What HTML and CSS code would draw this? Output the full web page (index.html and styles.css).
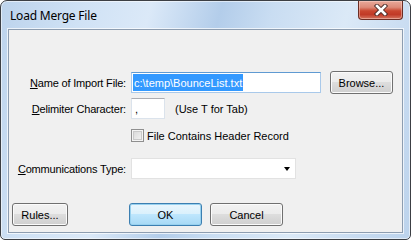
FILE: index.html
```html
<!DOCTYPE html>
<html lang="en">
<head>
	<meta charset="UTF-8">
	<title>Load Merge File</title>
	<link rel="stylesheet" href="styles.css">
</head>
<body>

	<div class="window">
		<div class="titlebar">
			<span class="title">Load Merge File</span>
			<span class="close">
				<svg width="16" height="12" viewBox="0 0 16 12">
					<path d="M4 2 L12 10 M12 2 L4 10" stroke="#4a2a26" stroke-width="4.4" stroke-linecap="square"/>
					<path d="M4 2 L12 10 M12 2 L4 10" stroke="#ffffff" stroke-width="2.6" stroke-linecap="square"/>
				</svg>
			</span>
		</div>

		<div class="client">
			<div class="row row-file">
				<span class="lbl"><u>N</u>ame of Import File:</span>
				<span class="edit edit-file"><span class="sel">c:\temp\BounceList.txt</span></span>
				<button class="btn btn-browse">Browse...</button>
			</div>

			<div class="row row-delim">
				<span class="lbl"><u>D</u>elimiter Character:</span>
				<span class="edit edit-delim">,</span>
				<span class="hint">(Use T for Tab)</span>
			</div>

			<div class="row row-check">
				<span class="check"></span>
				<span class="check-text">File Contains Header Record</span>
			</div>

			<div class="row row-comm">
				<span class="lbl"><u>C</u>ommunications Type:</span>
				<span class="combo"><span class="arrow"></span></span>
			</div>

			<div class="row row-buttons">
				<button class="btn btn-rules">Rules...</button>
				<button class="btn btn-ok">OK</button>
				<button class="btn btn-cancel">Cancel</button>
			</div>
		</div>
	</div>

</body>
</html>
```

FILE: styles.css
```css
*{
	box-sizing: border-box;
}
body{
	margin: 0;
	font-family: "Liberation Sans", Arial, sans-serif;
	font-size: 11px;
	color: #000;
	background: #fff;
}
.window{
	width: 411px;
	height: 240px;
	border: 1px solid #3c3f44;
	border-radius: 7px 7px 5px 5px;
	padding: 0 7px 6px 7px;
	display: flex;
	flex-direction: column;
	background: linear-gradient(105deg, #bcd3ec 0%, #d0e2f5 18%, #dbe9f8 32%, #b3cdea 47%, #c9ddf2 58%, #dbe9f7 74%, #c6daf0 90%, #bcd3ec 100%);
	box-shadow: inset 0 0 0 1px rgba(255,255,255,.55);
}
.titlebar{
	height: 28px;
	display: flex;
}
.title{
	align-self: center;
	margin: 1px 0 0 2px;
	font-family: "Noto Sans", "Liberation Sans", sans-serif;
	font-size: 12px;
	letter-spacing: -0.2px;
	color: #000;
}
.close{
	margin-left: auto;
	width: 45px;
	height: 19px;
	display: flex;
	align-items: center;
	justify-content: center;
	border: 1px solid #6b2d24;
	border-top: none;
	border-radius: 0 0 4px 4px;
	background: linear-gradient(#e9a99a 0%, #dd8a78 35%, #c9462f 55%, #c13a27 75%, #d47560 100%);
	box-shadow: inset 0 0 0 1px rgba(255,220,210,.45);
}
.client{
	flex: 1;
	border: 1px solid #8d9db0;
	background: #f0f0f0;
	box-shadow: 0 0 0 1px rgba(255,255,255,.7);
	display: flex;
	flex-direction: column;
}
.row{
	display: flex;
	align-items: center;
}
.lbl{
	width: 117px;
	margin-right: 5px;
	text-align: right;
	white-space: nowrap;
	letter-spacing: -0.18px;
}
.lbl u{
	text-decoration-thickness: 1px;
	text-underline-offset: 1px;
}
.edit{
	height: 21px;
	background: #fff;
	border: 1px solid #dbe3ec;
	border-top-color: #abadb3;
	display: flex;
	align-items: center;
	padding-left: 2px;
	white-space: nowrap;
}
.row-file{
	margin-top: 41px;
	height: 23px;
}
.edit-file{
	width: 190px;
	border-color: #a9c9ea;
	border-top-color: #5f9ad2;
	padding: 1px;
	align-items: stretch;
}
.sel{
	background: #3399ff;
	color: #fff;
	display: flex;
	align-items: center;
	padding: 0 1px;
}
.btn{
	font-family: "Liberation Sans", Arial, sans-serif;
	font-size: 11px;
	color: #000;
	height: 23px;
	padding: 0;
	border: 1px solid #707070;
	border-radius: 3px;
	background: linear-gradient(#f2f2f2 0%, #ebebeb 50%, #dddddd 50%, #cfcfcf 100%);
	box-shadow: inset 0 0 0 1px #fbfbfb;
}
.btn-browse{
	margin-left: 9px;
	width: 63px;
}
.row-delim{
	margin-top: 4px;
	height: 21px;
}
.edit-delim{
	width: 34px;
	padding-left: 3px;
}
.hint{
	margin-left: 10px;
}
.row-check{
	margin-top: 9px;
	height: 15px;
	padding-left: 122px;
}
.check{
	width: 13px;
	height: 13px;
	border: 1px solid #8f8f8f;
	background: linear-gradient(135deg, #d4d4d4, #f6f6f6);
	box-shadow: inset 0 0 0 1px #f4f4f4, inset 0 0 0 2px #c9c9c9;
}
.check-text{
	margin-left: 3px;
}
.row-comm{
	margin-top: 15px;
	height: 21px;
}
.combo{
	width: 165px;
	height: 21px;
	background: #fff;
	border: 1px solid #e2e2e2;
	display: flex;
	align-items: center;
	justify-content: flex-end;
	padding-right: 5px;
}
.arrow{
	border-top: 4px solid #000;
	border-left: 3.5px solid transparent;
	border-right: 3.5px solid transparent;
}
.row-buttons{
	margin-top: 24px;
	height: 23px;
}
.btn-rules{
	margin-left: 3px;
	width: 56px;
}
.btn-ok{
	margin-left: 61px;
	width: 73px;
	border-color: #3c7fb1;
	background: linear-gradient(#eaf6fd 0%, #d9f0fc 50%, #bee6fd 50%, #a7d9f5 100%);
	box-shadow: inset 0 0 0 1px #98d1ef;
}
.btn-cancel{
	margin-left: 8px;
	width: 73px;
}
```
